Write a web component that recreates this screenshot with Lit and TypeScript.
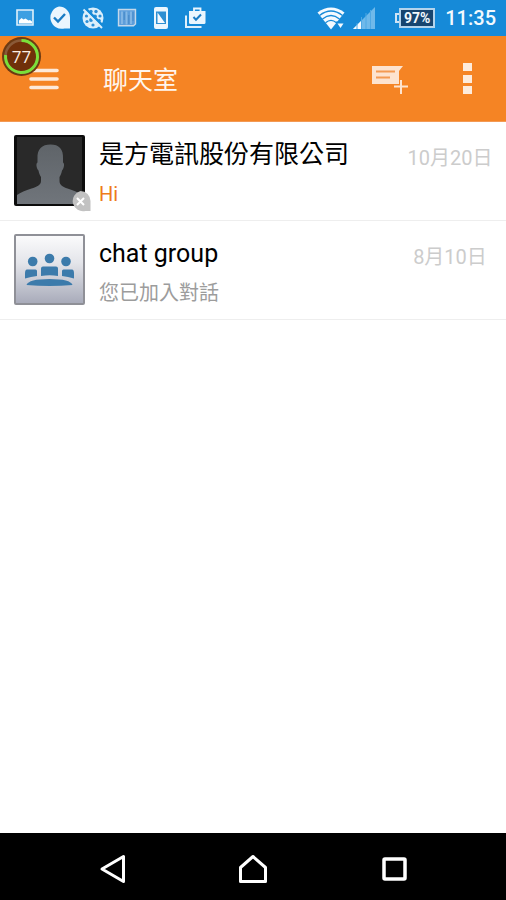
import { LitElement, html, css, svg } from "lit";
import { customElement, property } from "lit/decorators.js";

interface Chat {
  title: string;
  preview: string;
  date: string;
  kind: "person" | "group";
  unread?: boolean;
}

const CHATS: Chat[] = [
  { title: "是方電訊股份有限公司", preview: "Hi", date: "10月20日", kind: "person", unread: true },
  { title: "chat group", preview: "您已加入對話", date: "8月10日", kind: "group" },
];

// Notification icons, each drawn on a 24 by 24 grid.
const NOTIFICATIONS = [
  // picture
  svg`<path d="M4 4h16v15H4z" fill="#3d9fe2" stroke="#dff0fb" stroke-width="1.600"/>
      <path d="M6 17.500v-3l2.500-2.500 2 1.500 2-1 3 2 1.500-.500 2 1.500v2z" fill="#fff"/>`,
  // check bubble
  svg`<path d="M12 .500a11 11 0 0 1 11 11V22.500h-5.500A11 11 0 1 1 12 .500z" fill="#eaf6fe"/>
      <path d="M7 11.500l4 4 7-7.500" fill="none" stroke="#1a7cc4" stroke-width="2.400"/>`,
  // crossed-out globe
  svg`<circle cx="12" cy="12" r="10.500" fill="#dceffb"/>
      <g fill="#2c8fd6"><circle cx="10" cy="5.500" r="1.700"/><circle cx="15" cy="5.500" r="1.700"/><circle cx="19" cy="10" r="1.600"/><circle cx="14" cy="10.300" r="1.900"/><circle cx="18.300" cy="14.500" r="1.500"/><circle cx="5.500" cy="10" r="1.600"/><circle cx="6" cy="15.500" r="1.600"/><circle cx="10" cy="14" r="1.900"/><circle cx="12" cy="19" r="1.600"/></g>
      <path d="M4 2l19 19" stroke="#168ad8" stroke-width="2.600"/>
      <path d="M2.500 3.500l18.500 18.500" stroke="#dceffb" stroke-width="2"/>`,
  // map tile
  svg`<path d="M3.500 3.500h17v14.500l-2 1.800h-15z" fill="#5d9edb" stroke="#c3d8ea" stroke-width="1.400"/>
      <path d="M7 5.500v12.500M11.500 5.500v13M16 5.500v12.500" fill="none" stroke="#86b9e6" stroke-width="1.800"/>
      <path d="M9.200 6v8M13.800 9v9M18 6v9" stroke="#4688c6" stroke-width="1"/>`,
  // phone
  svg`<rect x="5" y="1" width="14" height="22" rx="2" fill="#eaf6fe"/>
      <path d="M7 5.500h10v12.500H7z" fill="#2d8fd2"/>
      <path d="M8.500 6.500l7.500 10.500H8.500z" fill="#f4faff"/>`,
  // store case with check
  svg`<path d="M3 9.500v11.500h15.500" fill="none" stroke="#dff0fb" stroke-width="2"/>
      <path d="M6 5h16.500v11.500q0 1.500-1.500 1.500H7.500Q6 18 6 16.500z" fill="#eaf6fe"/>
      <path d="M11 5V2.500h6.500V5" fill="none" stroke="#eaf6fe" stroke-width="1.800"/>
      <path d="M10.500 11l2.500 2.800 5-5.300" fill="none" stroke="#1a7cc4" stroke-width="2"/>`,
];

@customElement("status-bar")
export class StatusBar extends LitElement {
  static styles = css`
    :host {
      display: flex;
      align-items: center;
      height: 36px;
      padding: 0 10px 0 13px;
      background: #168ad8;
      color: #f2f9fe;
      font-family: Roboto, sans-serif;
    }
    svg {
      display: block;
    }
    .notifications {
      display: flex;
      gap: 10px;
      flex: 1;
    }
    .system {
      display: flex;
      align-items: center;
    }
    .signal {
      margin-left: 8px;
      margin-right: 20px;
    }
    .battery {
      display: flex;
      align-items: center;
    }
    .tip {
      width: 4px;
      height: 10px;
      box-sizing: border-box;
      border: 2px solid #cfe4f5;
      border-right: 0;
    }
    .level {
      box-sizing: border-box;
      width: 36px;
      height: 20px;
      border: 2px solid #b4d4ec;
      background: #17456f;
      font-size: 14px;
      font-weight: 700;
      line-height: 16px;
      text-align: center;
    }
    .clock {
      margin-left: 10px;
      font-size: 20px;
      font-weight: 500;
      line-height: 38px;
    }
  `;

  render() {
    return html`
      <div class="notifications">
        ${NOTIFICATIONS.map((n) => html`<svg width="24" height="24" viewBox="0 0 24 24" aria-hidden="true">${n}</svg>`)}
      </div>
      <div class="system">
        <svg width="28" height="24" viewBox="0 0 28 24" aria-hidden="true">
          <path d="M.500 6.500Q14-3.500 27.500 6.500L14 23.500z" fill="#f4faff" />
          <path d="M2.500 9.500Q14 .500 25.500 9.500M5.500 13Q14 6 22.500 13M8.500 16.800Q14 12 19.500 16.800" fill="none" stroke="#168ad8" stroke-width="1.300" />
          <path d="M19 15.500h9v8H19z" fill="#168ad8" />
          <path d="M20.500 17.500h6l-3 4.500z" fill="#f4faff" />
        </svg>
        <svg class="signal" width="22" height="22" viewBox="0 0 22 22" aria-hidden="true">
          <path d="M22 0v22H0z" fill="#6fb9ea" />
          <path d="M8.500 13.500v8.500H0z" fill="#f4faff" />
          <path d="M4 16v6M8.500 10v12M13 6v16M17.500 3v19" stroke="#4fa8e4" stroke-width="1" />
        </svg>
        <div class="battery">
          <span class="tip"></span>
          <span class="level">97%</span>
        </div>
        <time class="clock">11:35</time>
      </div>
    `;
  }
}

@customElement("chat-row")
export class ChatRow extends LitElement {
  @property({ attribute: false }) chat!: Chat;

  static styles = css`
    :host {
      display: block;
      border-bottom: 1px solid #eeeeee;
    }
    .row {
      display: flex;
      align-items: flex-start;
      padding: 13px 13px 14px 14px;
      height: 71px;
      color: #000;
      text-decoration: none;
    }
    .avatar {
      position: relative;
      flex: none;
      margin-right: 14px;
    }
    svg {
      display: block;
    }
    .presence {
      position: absolute;
      right: -6px;
      bottom: -6px;
    }
    .texts {
      flex: 1;
      min-width: 0;
    }
    .title,
    .preview {
      overflow: hidden;
      white-space: nowrap;
      text-overflow: ellipsis;
    }
    .title {
      margin: 0;
      font-size: 25px;
      font-weight: 400;
      line-height: 40px;
    }
    .preview {
      margin: 4px 0 0;
      font-size: 20px;
      line-height: 30px;
      color: #9c9c9c;
    }
    .unread {
      color: #ee7b1a;
    }
    .date {
      flex: none;
      width: 86px;
      margin-top: 6px;
      font-size: 20px;
      line-height: 34px;
      text-align: center;
      white-space: nowrap;
      color: #cccccc;
    }
  `;

  private person() {
    return html`
      <svg width="71" height="71" viewBox="0 0 71 71" aria-hidden="true">
        <defs>
          <linearGradient id="body" x1="0" y1="0" x2="0" y2="1">
            <stop offset="0" stop-color="#5f6469" />
            <stop offset="1" stop-color="#70757b" />
          </linearGradient>
        </defs>
        <rect width="71" height="71" rx="2" fill="#0c0c0c" />
        <rect x="3" y="2" width="65" height="67" fill="#292929" />
        <path
          d="M36.500 9.500c8.500 0 13 4.500 12.500 14v4c2 1 .800 6.500-1 8-.500 3-1.500 5-2.500 6.500v4c0 4 3.500 6 8 7.500 6 2 11 4 14.500 6.500v9H3v-9c3.500-2.500 8.500-4.500 14.500-6.500 5-1.500 9.500-3.500 9.500-7.500v-4c-1-1.500-2-3.500-2.500-6.500-1.800-1.500-3-7-1-8v-4c-.500-9.500 4.500-14 13-14z"
          fill="url(#body)"
        />
      </svg>
      <svg class="presence" width="21" height="21" viewBox="0 0 21 21" aria-hidden="true">
        <path d="M10.500 0a10 10 0 0 1 10 10v10h-5A10 10 0 1 1 10.500 0z" fill="#c2c2c2" />
        <path d="M7 7l7 7M14 7l-7 7" stroke="#fff" stroke-width="2" />
      </svg>
    `;
  }

  private group() {
    return html`
      <svg width="71" height="71" viewBox="0 0 71 71" aria-hidden="true">
        <defs>
          <linearGradient id="tile" x1="0" y1="0" x2="0" y2="1">
            <stop offset="0" stop-color="#fbfbfc" />
            <stop offset="0.400" stop-color="#e4e5ea" />
            <stop offset="1" stop-color="#a7aab9" />
          </linearGradient>
        </defs>
        <rect x="1" y="1" width="69" height="69" rx="1" fill="url(#tile)" stroke="#8f9097" stroke-width="2" />
        <g fill="#3c7bab">
          <circle cx="18.700" cy="27.500" r="4.800" />
          <circle cx="35.500" cy="24.500" r="4.800" />
          <circle cx="52" cy="27.500" r="4.800" />
          <path d="M13 35.500h8.500q1.500 0 1.500 1.500v5q-6 .500-12 2.500v-5q0-4 2-4z" />
          <path d="M29 32.500h13q2 0 2 2v7.500q-8-1.300-17 0v-7.500q0-2 2-2z" />
          <path d="M49.500 35.500H58q2 0 2 4v5q-6-2-12-2.500v-5q0-1.500 1.500-1.500z" />
          <path d="M12.500 51q2-6 23-6t23 6q-23 1.800-46 0z" />
        </g>
      </svg>
    `;
  }

  render() {
    const c = this.chat;
    return html`
      <a class="row" href="#chat">
        <div class="avatar">${c.kind === "person" ? this.person() : this.group()}</div>
        <div class="texts">
          <h2 class="title">${c.title}</h2>
          <p class="preview ${c.unread ? "unread" : ""}">${c.preview}</p>
        </div>
        <time class="date">${c.date}</time>
      </a>
    `;
  }
}

@customElement("app-root")
export class AppRoot extends LitElement {
  static styles = css`
    :host {
      display: flex;
      flex-direction: column;
      min-height: 100vh;
      background: #fff;
      font-family: Roboto, "Noto Sans CJK TC", sans-serif;
    }
    svg {
      display: block;
    }
    button {
      display: flex;
      align-items: center;
      justify-content: center;
      padding: 0;
      border: 0;
      background: none;
      color: inherit;
      font: inherit;
    }
    .bar {
      position: relative;
      display: flex;
      align-items: center;
      box-sizing: border-box;
      height: 86px;
      padding: 0 14px 0 19px;
      background: #f58424;
      border-bottom: 1px solid #f39a55;
      color: #fff6ee;
    }
    .action {
      width: 50px;
      height: 50px;
    }
    .heading {
      flex: 1;
      margin: 0 0 0 34px;
      padding-top: 4px;
      font-size: 25px;
      font-weight: 400;
      line-height: 38px;
    }
    .compose {
      margin-right: 27px;
    }
    .meter {
      position: absolute;
      left: 2px;
      top: 1px;
    }
    .value {
      font-family: "Open Sans", sans-serif;
      font-size: 17px;
    }
    .list {
      flex: 1;
    }
    .nav {
      display: grid;
      grid-template-columns: repeat(3, 1fr);
      height: 67px;
      box-sizing: border-box;
      padding: 5px 42px 0;
      background: #000;
    }
  `;

  render() {
    return html`
      <status-bar></status-bar>
      <header class="bar">
        <button class="action" aria-label="選單">
          <svg width="30" height="22" viewBox="0 0 30 22">
            <path d="M2 2.500h26M2 11h26M2 19.500h26" stroke="#fde9d9" stroke-width="3.600" stroke-linecap="round" />
          </svg>
        </button>
        <h1 class="heading">聊天室</h1>
        <button class="action compose" aria-label="新增對話">
          <svg width="38" height="30" viewBox="0 0 38 30">
            <path d="M1 2h31l-4 5v13H1z" fill="#fde3cf" />
            <path d="M5 7.500h19M5 13.500h14" stroke="#f49a52" stroke-width="1.800" />
            <path d="M30 16v14M23 22.500h14" stroke="#fde3cf" stroke-width="2" />
          </svg>
        </button>
        <button class="action" aria-label="更多選項">
          <svg width="9" height="32" viewBox="0 0 9 32">
            <path d="M0 0h9v8H0zM0 12h9v8H0zM0 23h9v8H0z" fill="#fdebdc" />
          </svg>
        </button>
        <svg class="meter" width="40" height="40" viewBox="0 0 40 40" role="img" aria-label="77">
          <circle cx="19.500" cy="19.500" r="19.500" fill="#6d3a12" />
          <circle cx="19.500" cy="19.500" r="16" fill="#70300a" stroke="#8a5a38" stroke-width="2.500" />
          <path d="M19.500 3.500a16 16 0 1 1-15.900 14.500" fill="none" stroke="#7be03a" stroke-width="3" />
          <text class="value" x="19.500" y="25.500" text-anchor="middle" fill="#fbeee4">77</text>
        </svg>
      </header>
      <main class="list">${CHATS.map((c) => html`<chat-row .chat=${c}></chat-row>`)}</main>
      <nav class="nav">
        <button aria-label="返回">
          <svg width="26" height="30" viewBox="0 0 26 30">
            <path d="M24.500 2.500v25L3 15z" fill="none" stroke="#fff" stroke-width="3" stroke-linejoin="round" />
          </svg>
        </button>
        <button aria-label="首頁">
          <svg width="30" height="30" viewBox="0 0 30 30">
            <path d="M15 2.500l12.500 11v14h-25v-14z" fill="none" stroke="#fff" stroke-width="3" stroke-linejoin="round" />
          </svg>
        </button>
        <button aria-label="最近使用">
          <svg width="26" height="26" viewBox="0 0 26 26">
            <rect x="3" y="3" width="21" height="20" rx="1" fill="none" stroke="#fff" stroke-width="3.500" />
          </svg>
        </button>
      </nav>
    `;
  }
}
